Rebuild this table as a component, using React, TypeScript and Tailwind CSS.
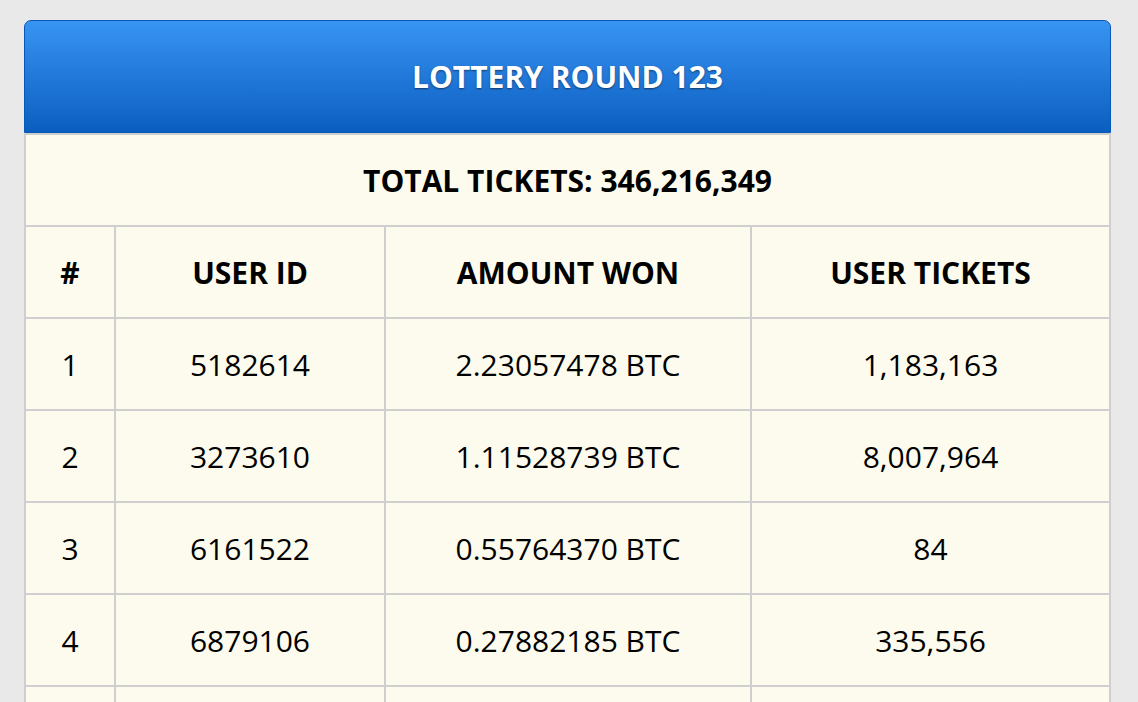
const rows = [
  { rank: "1", user: "5182614", won: "2.23057478 BTC", tickets: "1,183,163" },
  { rank: "2", user: "3273610", won: "1.11528739 BTC", tickets: "8,007,964" },
  { rank: "3", user: "6161522", won: "0.55764370 BTC", tickets: "84" },
  { rank: "4", user: "6879106", won: "0.27882185 BTC", tickets: "335,556" },
  // next row only shows its top edge in the frame
  { rank: "", user: "", won: "", tickets: "" },
];

const cell = "h-[92px] flex items-center justify-center border-b-2 border-[#cfcfcf]";

const App = () => {
  return (
    <div
      className="min-h-[702px] bg-[#e9e9e9] pt-5 pl-6 pr-[27px] text-black"
      style={{ fontFamily: '"Open Sans", "Liberation Sans", sans-serif' }}
    >
      <div className="h-[113px] flex items-center justify-center rounded-t-[7px] border border-[#0a58b3] bg-gradient-to-b from-[#3794f2] to-[#0a5ec0]">
        <h1 className="text-[30px] font-bold text-white [text-shadow:0_1px_2px_rgba(0,0,0,0.5)]">
          LOTTERY ROUND 123
        </h1>
      </div>

      <div className="bg-[#fdfbed] border-x-2 border-t-2 border-[#cfcfcf]">
        <div className={`${cell} text-[30px] font-bold`}>TOTAL TICKETS: 346,216,349</div>

        <div className="grid grid-cols-[90px_270px_366px_1fr] text-[30px]">
          <div className={`${cell} border-r-2 font-bold`}>#</div>
          <div className={`${cell} border-r-2 font-bold`}>USER ID</div>
          <div className={`${cell} border-r-2 font-bold`}>AMOUNT WON</div>
          <div className={`${cell} font-bold`}>USER TICKETS</div>

          {rows.map((r, i) => (
            <div key={i} className="contents">
              <div className={`${cell} border-r-2`}>{r.rank}</div>
              <div className={`${cell} border-r-2`}>{r.user}</div>
              <div className={`${cell} border-r-2`}>{r.won}</div>
              <div className={cell}>{r.tickets}</div>
            </div>
          ))}
        </div>
      </div>
    </div>
  );
};

export default App;
